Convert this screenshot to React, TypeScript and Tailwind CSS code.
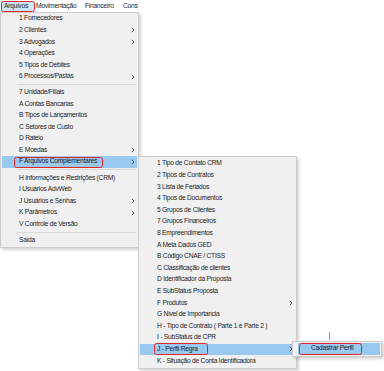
import React from "react";

type Item = { t?: string; arrow?: boolean; hl?: boolean; sep?: boolean };

const mainItems: Item[] = [
  { t: "1 Fornecedores" },
  { t: "2 Clientes", arrow: true },
  { t: "3 Advogados", arrow: true },
  { t: "4 Operações" },
  { t: "5 Tipos de Debites" },
  { t: "6 Processos/Pastas", arrow: true },
  { sep: true },
  { t: "7 Unidade/Filiais" },
  { t: "A Contas Bancarias" },
  { t: "B Tipos de Lançamentos" },
  { t: "C Setores de Custo" },
  { t: "D Rateio" },
  { t: "E Moedas", arrow: true },
  { t: "F Arquivos Complementares", arrow: true, hl: true },
  { sep: true },
  { t: "H Informações e Restrições (CRM)" },
  { t: "I Usuários AdvWeb" },
  { t: "J Usuários e Senhas", arrow: true },
  { t: "K Parâmetros", arrow: true },
  { t: "V Controle de Versão" },
  { sep: true },
  { t: "Saida" },
];

const subItems: Item[] = [
  { t: "1 Tipo de Contato CRM" },
  { t: "2 Tipos de Contratos" },
  { t: "3 Lista de Feriados" },
  { t: "4 Tipos de Documentos" },
  { t: "5 Grupos de Clientes" },
  { t: "7 Grupos Financeiros" },
  { t: "8 Empreendimentos" },
  { t: "A Meta Dados GED" },
  { t: "B Código CNAE / CTISS" },
  { t: "C Classificação de clientes" },
  { t: "D Identificador da Proposta" },
  { t: "E SubStatus Proposta" },
  { t: "F Produtos", arrow: true },
  { t: "G Nivel de Importancia" },
  { t: "H - Tipo de Contrato ( Parte 1 e Parte 2 )" },
  { t: "I - SubStatus de CPR" },
  { t: "J - Perfil Regra", arrow: true, hl: true },
  { t: "K - Situação de Conta Identificadora" },
];

function Chevron() {
  return (
    <svg width="4" height="6" viewBox="0 0 4 6" className="shrink-0">
      <path d="M0.8 0.8 L3 3 L0.8 5.2" fill="none" stroke="#444" strokeWidth="0.9" />
    </svg>
  );
}

function Row({ item, pl, pitch }: { item: Item; pl: string; pitch: string }) {
  if (item.sep) {
    return (
      <div className="h-[4.5px] flex items-center pl-[15px] pr-[1px]">
        <div className="h-px flex-1 bg-[#d7d7d7]" />
      </div>
    );
  }
  return (
    <div
      className={`${pitch} flex items-center justify-between ${pl} pr-[2px] ${
        item.hl ? "bg-[#99c9ef]" : ""
      }`}
    >
      <span className="whitespace-nowrap">{item.t}</span>
      {item.arrow ? <Chevron /> : null}
    </div>
  );
}

function RedBox({ cls }: { cls: string }) {
  return (
    <div
      className={`absolute border-[1.5px] border-[#e0242b] rounded-[2.5px] ${cls}`}
    />
  );
}

export default function App() {
  return (
    <div
      className="relative w-[384px] h-[371px] bg-white overflow-hidden text-[#1c1c1c] text-[6.7px] tracking-[-0.25px] leading-none"
      style={{ fontFamily: '"Liberation Sans", Arial, sans-serif' }}
    >
      {/* Menu bar */}
      <div className="flex items-center h-[12px] w-[138px] overflow-hidden bg-white whitespace-nowrap">
        <div className="h-[11px] mt-[1px] ml-[1px] w-[33px] shrink-0 bg-[#cce8ff] flex items-center pl-[3px]">
          Arquivos
        </div>
        <div className="w-[49px] shrink-0 pl-[2px]">Movimentação</div>
        <div className="w-[37px] shrink-0 pl-[2px]">Financeiro</div>
        <div className="shrink-0 pl-[3px]">Consultas</div>
      </div>

      {/* Main dropdown */}
      <div className="absolute left-0 top-[12px] w-[139px] bg-[#f0f0f0] border border-[#cccccc] px-[1px] pb-[1px] shadow-[2px_2px_3px_rgba(0,0,0,0.18)]">
        {mainItems.map((it, i) => (
          <Row key={i} item={it} pl="pl-[17px]" pitch="h-[11.55px]" />
        ))}
      </div>

      {/* Submenu */}
      <div className="absolute left-[138px] top-[156px] w-[159px] bg-[#f0f0f0] border border-[#cccccc] p-[1px] shadow-[2px_2px_3px_rgba(0,0,0,0.18)]">
        {subItems.map((it, i) => (
          <Row key={i} item={it} pl="pl-[17px]" pitch="h-[11.6px]" />
        ))}
      </div>

      {/* Third-level menu */}
      <div className="absolute left-[292px] top-[341px] w-[90px] bg-[#f0f0f0] border border-[#cccccc] p-[1px] shadow-[2px_2px_3px_rgba(0,0,0,0.18)]">
        <div className="h-[11.6px] flex items-center bg-[#99c9ef] ml-[4px] pl-[13px] whitespace-nowrap">
          Cadastrar Perfil
        </div>
      </div>

      {/* cursor artifact */}
      <div className="absolute left-[329px] top-[332px] w-px h-[8px] bg-[#9a9a9a]" />

      {/* Red annotation boxes */}
      <RedBox cls="left-[1px] top-[1px] w-[34px] h-[11px]" />
      <RedBox cls="left-[14px] top-[157px] w-[89px] h-[11px]" />
      <RedBox cls="left-[154px] top-[343px] w-[54px] h-[12px]" />
      <RedBox cls="left-[299px] top-[343px] w-[63px] h-[12px]" />
    </div>
  );
}
